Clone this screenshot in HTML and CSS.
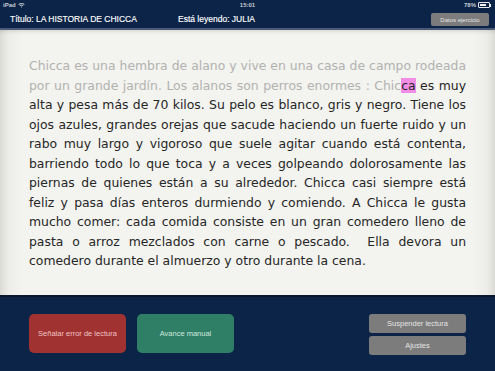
FILE: index.html
```
<!DOCTYPE html>
<html lang="es">
<head>
<meta charset="utf-8">
<title>La historia de Chicca</title>
<link rel="stylesheet" href="styles.css">
</head>
<body>
<div class="app">
  <div class="status">
    <span class="st-left">iPad <svg class="wifi" width="7" height="6" viewBox="0 0 7 6"><path d="M0.3 2.2 A4.6 4.6 0 0 1 6.7 2.2 L6 2.9 A3.6 3.6 0 0 0 1 2.9 Z M1.5 3.4 A2.9 2.9 0 0 1 5.5 3.4 L4.8 4.1 A1.9 1.9 0 0 0 2.2 4.1 Z M3.5 5.7 L2.7 4.8 A1.1 1.1 0 0 1 4.3 4.8 Z" fill="#c8ccd4"/></svg></span>
    <span class="st-mid">15:01</span>
    <span class="st-right">78% <span class="battery"><span class="battery-fill"></span></span><span class="battery-tip"></span></span>
  </div>
  <div class="topbar">
    <span class="title">Título: LA HISTORIA DE CHICCA</span>
    <span class="reader">Está leyendo: JULIA</span>
    <span class="spacer"></span>
    <button class="btn-gray btn-datos">Datos ejercicio</button>
  </div>
  <div class="content">
    <p class="story"><span class="read">Chicca es una hembra de alano y vive en una casa de campo rodeada por un grande jardín. Los alanos son perros enormes : Chic</span><span class="current">ca</span> es muy alta y pesa más de 70 kilos. Su pelo es blanco, gris y negro. Tiene los ojos azules, grandes orejas que sacude haciendo un fuerte ruido y un rabo muy largo y vigoroso que suele agitar cuando está contenta, barriendo todo lo que toca y a veces golpeando dolorosamente las piernas de quienes están a su alrededor. Chicca casi siempre está feliz y pasa días enteros durmiendo y comiendo. A Chicca le gusta mucho comer: cada comida consiste en un gran comedero lleno de pasta o arroz mezclados con carne o pescado.&nbsp; Ella devora un comedero durante el almuerzo y otro durante la cena.</p>
  </div>
  <div class="bottombar">
    <button class="btn-big btn-red">Señalar error de lectura</button>
    <button class="btn-big btn-green">Avance manual</button>
    <span class="spacer"></span>
    <div class="side-btns">
      <button class="btn-gray btn-side">Suspender lectura</button>
      <button class="btn-gray btn-side">Ajustes</button>
    </div>
  </div>
</div>
</body>
</html>
```
FILE: styles.css
```
* { box-sizing: border-box; }
html, body { margin: 0; padding: 0; }
body {
  width: 495px;
  height: 371px;
  overflow: hidden;
  font-family: "Liberation Sans", Arial, sans-serif;
  background: #0b2447;
}
.app {
  display: flex;
  flex-direction: column;
  height: 371px;
}
.status {
  height: 10px;
  display: flex;
  align-items: center;
  justify-content: space-between;
  padding: 0 4px 0 3px;
  background: #0b2447;
  color: #c8ccd4;
  font-size: 6px;
  font-weight: bold;
  position: relative;
}
.st-left { display: flex; align-items: center; gap: 2px; }
.st-mid {
  position: absolute;
  left: 0; right: 0;
  text-align: center;
}
.st-right { display: flex; align-items: center; gap: 2px; }
.battery {
  width: 12px;
  height: 6px;
  border: 1px solid #e8eaee;
  border-radius: 1px;
  padding: 1px;
  display: flex;
}
.battery-fill { width: 76%; background: #f4f5f7; }
.battery-tip { width: 1px; height: 3px; background: #e8eaee; margin-left: -2px; }
.topbar {
  height: 20px;
  display: flex;
  align-items: center;
  padding: 0 6px 0 10px;
  background: #0b2447;
  border-bottom: 2px solid #4b5b77;
  color: #ffffff;
  font-size: 8.5px;
  -webkit-text-stroke: 0.15px #ffffff;
}
.title { width: 168px; }
.spacer { flex: 1; }
.btn-gray {
  background: #7c7c7c;
  color: #e4e4e4;
  border: none;
  border-radius: 2px;
  font-family: "Liberation Sans", Arial, sans-serif;
  padding: 0;
  cursor: pointer;
  -webkit-text-stroke: 0;
}
.btn-datos {
  width: 58px;
  height: 13px;
  font-size: 6px;
  margin-top: 1px;
}
.content {
  height: 265px;
  background: linear-gradient(to right, #dcdcd7 0px, #ecece8 8px, #f3f3ef 22px, #f3f3ef 473px, #ecece8 487px, #dcdcd7 495px);
  padding: 26px 29px 0 29px;
  box-shadow: inset 0 4px 4px -3px rgba(0,0,0,0.15);
}
.story {
  margin: 0;
  font-family: "DejaVu Sans", Verdana, sans-serif;
  font-size: 12.4px;
  line-height: 19.5px;
  text-align: justify;
  color: #262626;
}
.read { color: #b2b2b0; }
.current { background: #f28de6; color: #262626; }
.bottombar {
  flex: 1;
  display: flex;
  align-items: flex-start;
  padding: 17px 29px 0 29px;
  background: #0b2447;
  border-top: 2px solid #06172e;
}
.btn-big {
  width: 97px;
  height: 39px;
  border: none;
  border-radius: 5px;
  font-family: "Liberation Sans", Arial, sans-serif;
  font-size: 7.5px;
  padding: 0;
  margin-right: 11px;
}
.btn-red { background: #a03231; color: #f1c3c5; }
.btn-green { background: #2f7f67; color: #cfe9de; }
.side-btns {
  display: flex;
  flex-direction: column;
  gap: 3px;
}
.btn-side {
  width: 97px;
  height: 19px;
  font-size: 7.5px;
  border-radius: 3px;
}
```
